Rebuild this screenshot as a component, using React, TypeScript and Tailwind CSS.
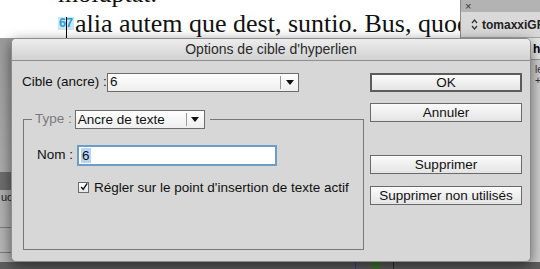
import React from 'react';

const ui = "font-['Liberation_Sans',Arial,sans-serif] text-[13.5px] text-[#111]";

function Arrow() {
  return (
    <svg width="8" height="5" viewBox="0 0 8 5" className="shrink-0">
      <path d="M0 0h8L4 5z" fill="#111" />
    </svg>
  );
}

function Select({ value, width }: { value: string; width: string }) {
  return (
    <div className={`flex h-[19px] ${width} items-stretch border border-[#6c6c6c] bg-gradient-to-b from-white to-[#eeeeee]`}>
      <div className="flex flex-1 items-center pl-[2px] leading-none">{value}</div>
      <div className="my-[2px] w-px bg-[#9a9a9a]" />
      <div className="flex w-[17px] items-center justify-center">
        <Arrow />
      </div>
    </div>
  );
}

function Button({ label, primary, className = '' }: { label: string; primary?: boolean; className?: string }) {
  return (
    <div
      className={`flex h-[19px] w-[152px] items-center justify-center bg-gradient-to-b from-[#fbfbfb] to-[#e4e4e4] leading-none ${
        primary ? 'border-2 border-[#5c5c5c]' : 'border border-[#6a6a6a]'
      } ${className}`}
    >
      {label}
    </div>
  );
}

export default function App() {
  return (
    <div className="relative h-[269px] w-[540px] overflow-hidden bg-white">
      {/* document + panel behind the dialog */}
      <div className="flex h-[262px]">
        <div className="w-[460px] overflow-hidden pl-[58px] font-['Liberation_Serif',serif] text-[26px] leading-[30px] text-[#111]">
          <div className="-mt-[21px] whitespace-nowrap">moluptat.</div>
          <div className="whitespace-nowrap">
            <span className="relative mr-px inline-block bg-[#cde7f6] px-[1px] align-[5px] font-['Liberation_Sans',sans-serif] text-[12.5px] font-bold leading-[13px] text-[#2a9fd8]">
              67
              <span className="absolute left-[8px] top-0 h-[21px] w-px bg-black" />
            </span>
            alia autem que dest, suntio. Bus, quod
          </div>
        </div>
        <div className="w-[80px] border-l border-[#8a8a8a] bg-[#cfcfcf] font-['Liberation_Sans',sans-serif]">
          <div className="flex h-[12px] items-center overflow-hidden bg-[#b3b3b3] pl-[4px] text-[11px] leading-[12px] text-[#333]">×</div>
          <div className="flex h-[26px] items-center gap-[4px] border-b border-[#a5a5a5] bg-[#d9d9d9] pl-[10px] text-[12px] font-bold text-[#222]">
            <svg width="7" height="11" viewBox="0 0 7 11" className="shrink-0">
              <path d="M1 4l2.5-3L6 4M1 7l2.5 3L6 7" fill="none" stroke="#333" strokeWidth="1.2" />
            </svg>
            <span className="whitespace-nowrap">tomaxxiGREP</span>
          </div>
          <div className="flex h-[22px] items-center border-b border-[#999] bg-[#e6e6e6] pl-[72px] text-[12px] font-bold">hem</div>
          <div className="pl-[74px] pt-[4px] text-[10px] leading-[11px] text-[#333]">
            <div>le</div>
            <div>+</div>
          </div>
        </div>
      </div>

      {/* window on the left, behind the dialog */}
      <div className="absolute left-0 top-[38px] flex h-[224px] w-[40px] flex-col bg-gradient-to-b from-[#9c9c9c] to-[#b8b8b8] font-['Liberation_Sans',sans-serif] text-[11px]">
        <div className="h-[134px]" />
        <div className="h-[18px] bg-[#6e6e6e]" />
        <div className="h-[38px] border-b border-[#7c7c7c] pl-[1px] pt-[2px] leading-none text-[#222]">ucc</div>
        <div className="h-[25px] border-b border-[#7c7c7c]" />
      </div>

      {/* bottom strip */}
      <div className="flex h-[7px] items-start bg-[#5e5e5e]">
        <div className="ml-[355px] h-[7px] w-px bg-[#2a3fa8]" />
        <div className="ml-[15px] h-[7px] w-[10px] rounded-b-full bg-[#3c7a2a]" />
        <div className="ml-[12px] h-[7px] w-px bg-[#2e2e2e]" />
      </div>

      {/* dialog */}
      <div className={`absolute left-[11px] top-[38px] flex h-[224px] w-[520px] flex-col overflow-hidden rounded-[5px] border border-[#8c8c8c] bg-[#d7d7d7] shadow-[0_4px_14px_rgba(0,0,0,0.55)] ${ui}`}>
        <div className="flex h-[22px] shrink-0 items-center justify-center border-b border-[#8e8e8e] bg-gradient-to-b from-[#ededed] to-[#d1d1d1] text-[14px] text-[#2a2a2a]">
          Options de cible d'hyperlien
        </div>

        <div className="flex flex-1 pl-[10px] pt-[11px]">
          <div className="w-[342px]">
            <div className="flex items-center">
              <span className="w-[85px] whitespace-nowrap">Cible (ancre) :</span>
              <Select value="6" width="w-[192px]" />
            </div>

            <fieldset className="ml-px mt-[17px] h-[141px] w-[341px] border border-[#767676]">
              <legend className="ml-[8px] flex items-center pl-[3px] pr-[5px]">
                <span className="mr-[3px] text-[#7a7a7a]">Type :</span>
                <Select value="Ancre de texte" width="w-[130px]" />
              </legend>
              <div className="pl-[13px] pt-[15px]">
                <div className="flex items-center">
                  <span className="w-[40px] whitespace-nowrap">Nom :</span>
                  <div className="flex h-[21px] w-[200px] items-center border-2 border-[#6d9bcb] bg-white pl-[2px]">
                    <span className="bg-[#b7d4f4] px-px leading-[15px]">6</span>
                  </div>
                </div>
                <div className="ml-[41px] mt-[12px] flex items-center gap-[5px]">
                  <div className="flex h-[11px] w-[11px] items-center justify-center border border-[#6a6a6a] bg-gradient-to-b from-white to-[#e8e8e8]">
                    <svg width="10" height="10" viewBox="0 0 10 10" className="-mt-[2px] ml-[1px]">
                      <path d="M1.5 5l2.5 3L9 0.5" fill="none" stroke="#111" strokeWidth="1.8" />
                    </svg>
                  </div>
                  <span className="whitespace-nowrap">Régler sur le point d'insertion de texte actif</span>
                </div>
              </div>
            </fieldset>
          </div>

          <div className="ml-[6px] mt-px flex flex-col">
            <Button label="OK" primary />
            <Button label="Annuler" className="mt-[11px]" />
            <Button label="Supprimer" className="mt-[33px]" />
            <Button label="Supprimer non utilisés" className="mt-[12px]" />
          </div>
        </div>
      </div>
    </div>
  );
}
